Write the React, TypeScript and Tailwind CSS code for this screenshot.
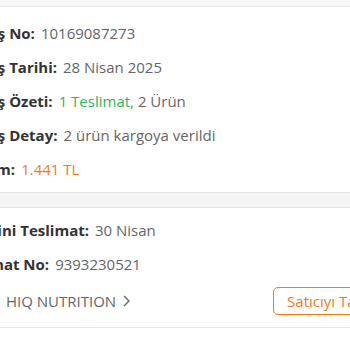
const rows1 = [
  { label: "Sipariş No:", value: <span className="text-[#666]">10169087273</span> },
  { label: "Sipariş Tarihi:", value: <span className="text-[#666]">28 Nisan 2025</span> },
  {
    label: "Sipariş Özeti:",
    value: (
      <span>
        <span className="text-[#2fb561]">1 Teslimat,</span>{" "}
        <span className="text-[#666]">2 Ürün</span>
      </span>
    ),
  },
  { label: "Sipariş Detay:", value: <span className="text-[#666]">2 ürün kargoya verildi</span> },
  { label: "Toplam:", value: <span className="text-[#f27a1a]">1.441 TL</span> },
];

const rows2 = [
  { label: "Tahmini Teslimat:", value: <span className="text-[#666]">30 Nisan</span> },
  { label: "Teslimat No:", value: <span className="text-[#666]">9393230521</span> },
];

const Row = ({ label, value }: { label: string; value: React.ReactNode }) => (
  <div className="flex items-center gap-[6px] h-[34px]">
    <span className="font-bold text-[#333]">{label}</span>
    {value}
  </div>
);

export default function App() {
  return (
    <div
      className="w-[350px] h-[350px] overflow-hidden bg-white text-[15px] leading-none"
      style={{ fontFamily: "'Open Sans', 'Noto Sans', sans-serif" }}
    >
      <div className="h-[7px] bg-[#f7f7f7] border-b border-[#e8e8e8]" />
      <div className="-ml-[45px] w-[462px] pt-[9px] pb-[6px]">
        {rows1.map((r) => (
          <Row key={r.label} {...r} />
        ))}
      </div>
      <div className="h-[16px] bg-[#f5f5f5] border-y border-[#e6e6e6]" />
      <div className="-ml-[45px] w-[462px] pt-[5px] pb-[6px] pr-[9px]">
        {rows2.map((r) => (
          <Row key={r.label} {...r} />
        ))}
        <div className="flex items-center justify-between h-[40px]">
          <div className="flex items-center gap-[6px]">
            <span className="font-bold text-[#333]">Satıcı:</span>
            <span className="text-[#666]">HIQ NUTRITION</span>
            <svg width="10" height="14" viewBox="0 0 10 14">
              <path d="M2 2l5 5-5 5" fill="none" stroke="#666" strokeWidth="1.4" />
            </svg>
          </div>
          <button className="h-[28px] px-[13px] border border-[#f27a1a] rounded-[5px] text-[#f27a1a] text-[15px]">
            Satıcıyı Takip Et
          </button>
        </div>
      </div>
      <div className="border-t border-[#e8e8e8]" />
    </div>
  );
}
